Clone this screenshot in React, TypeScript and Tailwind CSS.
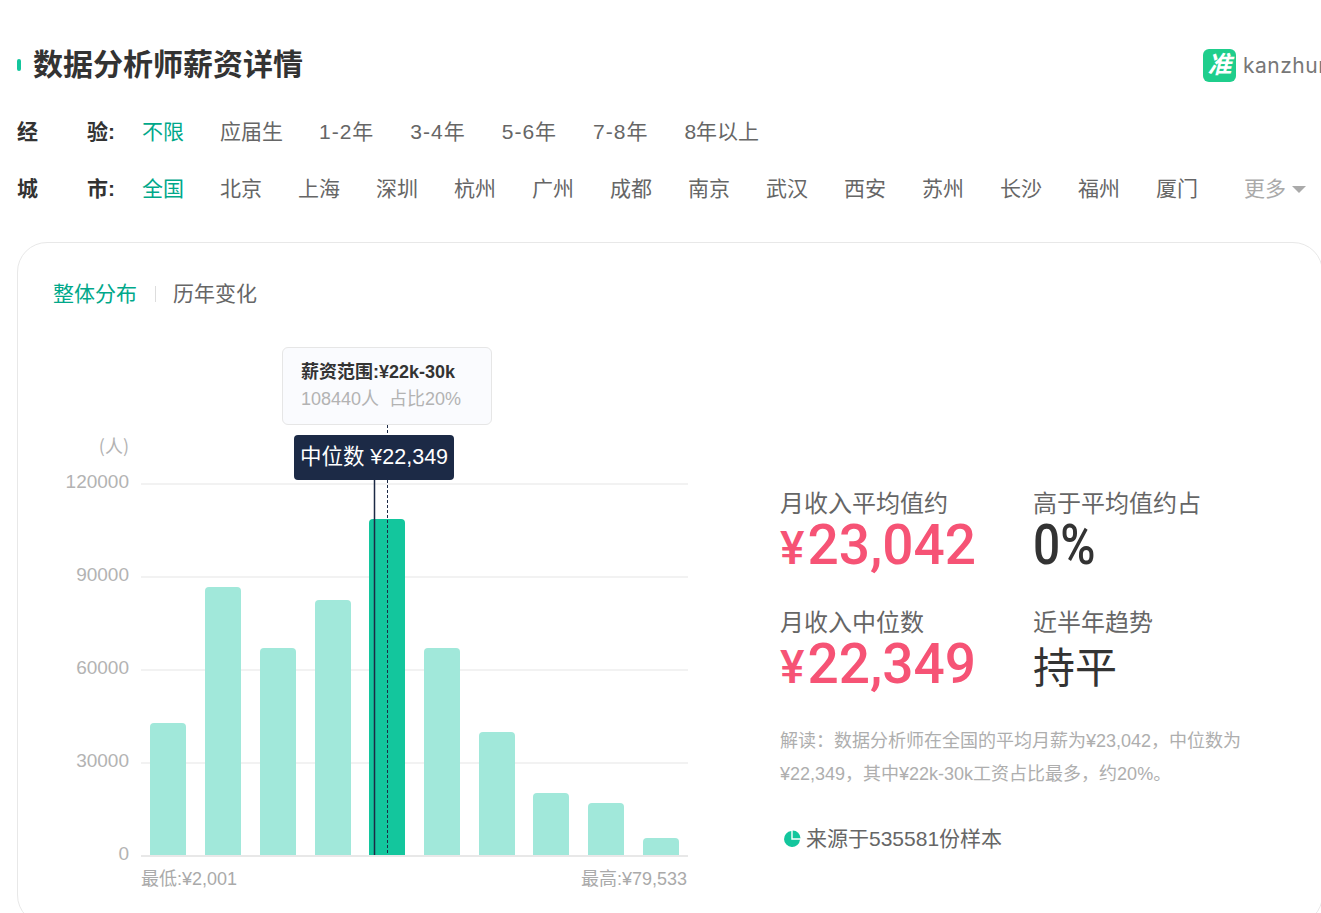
const FONT = "font-['Liberation_Sans','Noto_Sans_CJK_SC',sans-serif]";

const experience = ["不限", "应届生", "1-2年", "3-4年", "5-6年", "7-8年", "8年以上"];
const cities = ["全国", "北京", "上海", "深圳", "杭州", "广州", "成都", "南京", "武汉", "西安", "苏州", "长沙", "福州", "厦门"];

const bars = [
  { x: 150, top: 723 },
  { x: 205, top: 587 },
  { x: 260, top: 648 },
  { x: 315, top: 600 },
  { x: 369, top: 519, active: true },
  { x: 424, top: 648 },
  { x: 479, top: 732 },
  { x: 533, top: 793 },
  { x: 588, top: 803 },
  { x: 643, top: 838 },
];

const ticks = [
  { y: 484, label: "120000" },
  { y: 577, label: "90000" },
  { y: 670, label: "60000" },
  { y: 763, label: "30000" },
  { y: 856, label: "0" },
];

function FilterRow({ first, last, items, more }: { first: string; last: string; items: string[]; more?: boolean }) {
  return (
    <div className="flex h-[24px] items-center text-[21px] leading-[24px]">
      <div className="flex w-[98px] shrink-0 justify-between font-bold text-[#333]">
        <span>{first}</span>
        <span>{last}:</span>
      </div>
      <div className="ml-[27px] flex gap-[36px] text-[#666]">
        {items.map((item, i) => (
          <span key={item} className={`${i === 0 ? "text-[#00a88a]" : ""} ${item.includes("-") ? "tracking-[1px]" : ""}`}>
            {item}
          </span>
        ))}
      </div>
      {more && (
        <div className="ml-[46px] flex items-center gap-[6px] text-[#aaa]">
          <span>更多</span>
          <span className="mt-[1px] h-0 w-0 border-x-[7px] border-t-[7px] border-x-transparent border-t-[#aaa]" />
        </div>
      )}
    </div>
  );
}

function SalaryChart() {
  return (
    <div className="relative h-[560px] w-[722px] shrink-0">
      <svg viewBox="18 340 722 560" className="absolute inset-0 h-full w-full">
        {ticks.map((t) => (
          <g key={t.label}>
            <line x1="141" x2="688" y1={t.y} y2={t.y} stroke={t.y === 856 ? "#e8e8e8" : "#eeeeee"} strokeWidth={t.y === 856 ? 2 : 1.5} />
            <text x="129" y={t.y + 4} textAnchor="end" fontSize="19" fill="#b3b3b3" fontFamily="Liberation Sans">
              {t.label}
            </text>
          </g>
        ))}
        <text x="129" y="453" textAnchor="end" fontSize="18" fill="#b3b3b3" fontFamily="Noto Sans CJK SC">
          (人)
        </text>
        {bars.map((b) => (
          <path
            key={b.x}
            d={`M${b.x} 855 V${b.top + 4} Q${b.x} ${b.top} ${b.x + 4} ${b.top} H${b.x + 32} Q${b.x + 36} ${b.top} ${b.x + 36} ${b.top + 4} V855 Z`}
            fill={b.active ? "#13c69d" : "#a1e8da"}
          />
        ))}
        <line x1="374.5" x2="374.5" y1="480" y2="855" stroke="#1c2a46" strokeWidth="1.5" />
        <line x1="387.5" x2="387.5" y1="425" y2="855" stroke="#1c2a46" strokeWidth="1" strokeDasharray="3 2" />
        <text x="141" y="885" fontSize="18" fill="#aaaaaa" fontFamily="Liberation Sans, Noto Sans CJK SC">
          最低:¥2,001
        </text>
        <text x="687" y="885" textAnchor="end" fontSize="18" fill="#aaaaaa" fontFamily="Liberation Sans, Noto Sans CJK SC">
          最高:¥79,533
        </text>
      </svg>
      <div className="absolute left-[264px] top-[7px] h-[78px] w-[210px] rounded-[6px] border border-[#e6e6e6] bg-[#fafbfe] px-[18px] pt-[12px]">
        <p className="text-[18px] font-bold leading-[24px] text-[#333]">薪资范围:¥22k-30k</p>
        <p className="mt-[3px] whitespace-pre text-[18px] leading-[24px] text-[#b3b3b3]">108440人  占比20%</p>
      </div>
      <div className="absolute left-[276px] top-[95px] flex h-[45px] w-[160px] items-center justify-center rounded-[4px] bg-[#1c2a46] text-[21.5px] text-white">
        中位数 ¥22,349
      </div>
    </div>
  );
}

function Money({ label, value }: { label: string; value: string }) {
  return (
    <div>
      <p className="text-[24px] leading-[28px] text-[#666]">{label}</p>
      <p className="font-['Roboto',sans-serif] text-[55px] font-medium leading-[54px] text-[#f65375]">
        <span className="mr-[3px] text-[46px]">¥</span>
        {value}
      </p>
    </div>
  );
}

export default function App() {
  return (
    <div className={`${FONT} h-[913px] w-[1321px] overflow-hidden bg-white pl-[17px] pt-[46px]`}>
      <div className="flex h-[38px] items-center justify-between">
        <div className="flex items-center">
          <span className="h-[12px] w-[4px] rounded-[2px] bg-[#13c69d]" />
          <h1 className="ml-[12px] text-[30px] font-bold leading-[38px] text-[#333]">数据分析师薪资详情</h1>
        </div>
        <div className="flex w-[118px] shrink-0 items-center">
          <div className="flex h-[33px] w-[33px] shrink-0 items-center justify-center rounded-[6px] bg-[#1fce8c] text-[24px] font-bold italic leading-none text-white">
            准
          </div>
          <span className="ml-[7px] whitespace-nowrap font-['Inter',sans-serif] text-[21px] leading-[33px] tracking-[0.5px] text-[#777]">
            kanzhun
          </span>
        </div>
      </div>

      <div className="mt-[36px] flex flex-col gap-[33px]">
        <FilterRow first="经" last="验" items={experience} />
        <FilterRow first="城" last="市" items={cities} more />
      </div>

      <section className="mt-[41px] h-[683px] w-[1306px] rounded-[30px] border border-[#e8e8e8]">
        <div className="flex items-center pl-[35px] pt-[38px] text-[21px] leading-[26px]">
          <span className="text-[#00a88a]">整体分布</span>
          <span className="ml-[18px] mr-[17px] h-[16px] w-[1px] bg-[#ddd]" />
          <span className="text-[#666]">历年变化</span>
        </div>
        <div className="mt-[33px] flex">
          <SalaryChart />
          <div className="ml-[40px] w-[480px] pt-[150px]">
            <div className="grid grid-cols-[253px_1fr] gap-y-[34px]">
              <Money label="月收入平均值约" value="23,042" />
              <div>
                <p className="text-[24px] leading-[28px] text-[#666]">高于平均值约占</p>
                <p className="origin-left scale-x-[0.87] font-['Roboto',sans-serif] text-[55px] font-medium leading-[54px] text-[#333]">0%</p>
              </div>
              <Money label="月收入中位数" value="22,349" />
              <div>
                <p className="text-[24px] leading-[28px] text-[#666]">近半年趋势</p>
                <p className="h-[54px] pt-[5px] text-[42px] leading-[54px] text-[#333]">持平</p>
              </div>
            </div>
            <p className="mt-[31px] w-[470px] text-[18px] leading-[33px] text-[#aeaeae]">
              {"解读\uFF1A数据分析师在全国的平均月薪为¥23,042\uFF0C中位数为¥22,349\uFF0C其中¥22k-30k工资占比最多\uFF0C约20%。"}
            </p>
            <div className="mt-[34px] flex items-center pl-[3px] text-[21px] leading-[28px] text-[#666]">
              <svg viewBox="0 0 18 18" className="mr-[5px] h-[18px] w-[18px]">
                <path d="M8.3 1 A8 8 0 1 0 17 9.7 H8.3 Z" fill="#13c69d" />
                <path d="M9.7 0.5 A8 8 0 0 1 17.5 8.3 H9.7 Z" fill="#13c69d" />
              </svg>
              来源于535581份样本
            </div>
          </div>
        </div>
      </section>
    </div>
  );
}
